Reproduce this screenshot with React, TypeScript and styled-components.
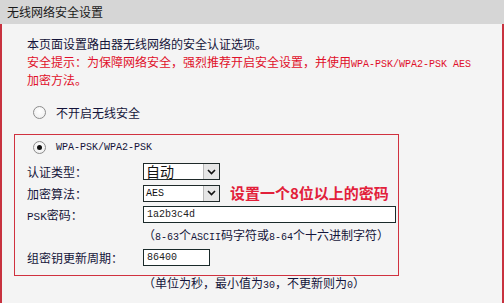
import React from "react";
import styled, { createGlobalStyle } from "styled-components";

const GlobalStyle = createGlobalStyle`
  html, body {
    margin: 0;
    padding: 0;
    background: #f4f4f4;
  }
  body {
    font-family: "Noto Sans CJK SC", "Liberation Sans", sans-serif;
    font-size: 12px;
    color: #14143a;
  }
`;

const Page = styled.div`
  width: 504px;
  height: 303px;
  background: #f4f4f4;
  display: flex;
  flex-direction: column;
  overflow: hidden;
`;

const Header = styled.div`
  height: 24px;
  line-height: 24px;
  padding-left: 7px;
  background: #d6d6d6;
  color: #1a1a1a;
  font-size: 12px;
`;

const Panel = styled.div`
  flex: 1;
  border-left: 2px solid #c8323f;
  border-right: 2px solid #c8323f;
  padding: 11px 0 0 25px;
  display: flex;
  flex-direction: column;
`;

const Line = styled.div<{ $red?: boolean }>`
  line-height: 18px;
  height: 18px;
  white-space: nowrap;
  color: ${(p) => (p.$red ? "#e0102a" : "#14143a")};
`;

const Latin = styled.span<{ $size?: number }>`
  font-family: "Liberation Mono", monospace;
  font-size: ${(p) => p.$size ?? 10}px;
`;

const RadioRow = styled.label<{ $top?: number }>`
  display: flex;
  align-items: center;
  height: 18px;
  margin: ${(p) => p.$top ?? 0}px 0 0 6px;
  gap: 10px;
  white-space: nowrap;
`;

const RadioDot = styled.span<{ $checked?: boolean }>`
  width: 11px;
  height: 11px;
  border-radius: 50%;
  border: 1px solid #8c8c8c;
  background: radial-gradient(circle at 50% 40%, #ffffff 0%, #ececec 100%);
  display: flex;
  align-items: center;
  justify-content: center;

  &::after {
    content: "";
    display: ${(p) => (p.$checked ? "block" : "none")};
    width: 5px;
    height: 5px;
    border-radius: 50%;
    background: #111;
  }
`;

const SecurityBox = styled.div`
  margin: 13px 0 0 -13px;
  width: 371px;
  border: 1px solid #d0313f;
  padding: 3px 0 6px 12px;
`;

const Form = styled.div`
  display: grid;
  grid-template-columns: 116px 1fr;
  grid-auto-rows: 21.5px;
  margin-top: 5px;
  align-items: center;
`;

const Label = styled.div`
  white-space: nowrap;
`;

const Field = styled.div`
  display: flex;
  align-items: center;
  gap: 10px;
  white-space: nowrap;
`;

const FieldText = styled.div`
  white-space: nowrap;
  line-height: 18px;
`;

const SelectBox = styled.div`
  width: 77px;
  height: 17px;
  box-sizing: border-box;
  border: 1px solid #1f2a2a;
  background: #fff;
  display: flex;
  align-items: stretch;
`;

const SelectText = styled.div<{ $big?: boolean }>`
  flex: 1;
  padding-left: 2px;
  line-height: 15px;
  font-size: ${(p) => (p.$big ? "14px" : "10px")};
  font-family: ${(p) =>
    p.$big ? `"Noto Sans CJK SC", sans-serif` : `"Liberation Mono", monospace`};
  color: #111;
`;

const SelectArrow = styled.div`
  width: 15px;
  background: #e6e6e6;
  border-left: 1px solid #b8b8b8;
  display: flex;
  align-items: center;
  justify-content: center;
`;

const TextInput = styled.div<{ $width: number }>`
  width: ${(p) => p.$width}px;
  height: 17px;
  box-sizing: border-box;
  border: 1px solid #1a2a2a;
  background: #fff;
  padding-left: 3px;
  line-height: 15px;
  font-family: "Liberation Mono", monospace;
  font-size: 10px;
  color: #222;
`;

const Hint = styled.span`
  color: #e2203a;
  font-weight: bold;
  font-size: 15px;
  line-height: 18px;
`;

const Note = styled.div`
  margin-left: 116px;
  line-height: 14px;
  white-space: nowrap;
`;

function Arrow() {
  return (
    <svg width="9" height="6" viewBox="0 0 9 6">
      <path d="M1 1 L4.5 4.5 L8 1" stroke="#111" strokeWidth="1.6" fill="none" />
    </svg>
  );
}

function Select({ value, big }: { value: string; big?: boolean }) {
  return (
    <SelectBox>
      <SelectText $big={big}>{value}</SelectText>
      <SelectArrow>
        <Arrow />
      </SelectArrow>
    </SelectBox>
  );
}

export default function App() {
  return (
    <Page>
      <GlobalStyle />
      <Header>无线网络安全设置</Header>
      <Panel>
        <Line>本页面设置路由器无线网络的安全认证选项。</Line>
        <Line $red>
          安全提示：为保障网络安全，强烈推荐开启安全设置，并使用
          <Latin>WPA-PSK/WPA2-PSK AES</Latin>
        </Line>
        <Line $red>加密方法。</Line>
        <RadioRow $top={14}>
          <RadioDot />
          不开启无线安全
        </RadioRow>
        <SecurityBox>
          <RadioRow>
            <RadioDot $checked />
            <Latin>WPA-PSK/WPA2-PSK</Latin>
          </RadioRow>
          <Form>
            <Label>认证类型：</Label>
            <Field>
              <Select value="自动" big />
            </Field>
            <Label>加密算法：</Label>
            <Field>
              <Select value="AES" />
              <Hint>设置一个8位以上的密码</Hint>
            </Field>
            <Label>
              <Latin $size={11}>PSK</Latin>密码：
            </Label>
            <Field>
              <TextInput $width={253}>1a2b3c4d</TextInput>
            </Field>
            <Label />
            <FieldText>
              （<Latin>8-63</Latin>个<Latin>ASCII</Latin>码字符或<Latin>8-64</Latin>个十六进制字符）
            </FieldText>
            <Label>组密钥更新周期：</Label>
            <Field>
              <TextInput $width={67}>86400</TextInput>
            </Field>
          </Form>
        </SecurityBox>
        <Note>
          （单位为秒，最小值为<Latin>30</Latin>，不更新则为<Latin>0</Latin>）
        </Note>
      </Panel>
    </Page>
  );
}
